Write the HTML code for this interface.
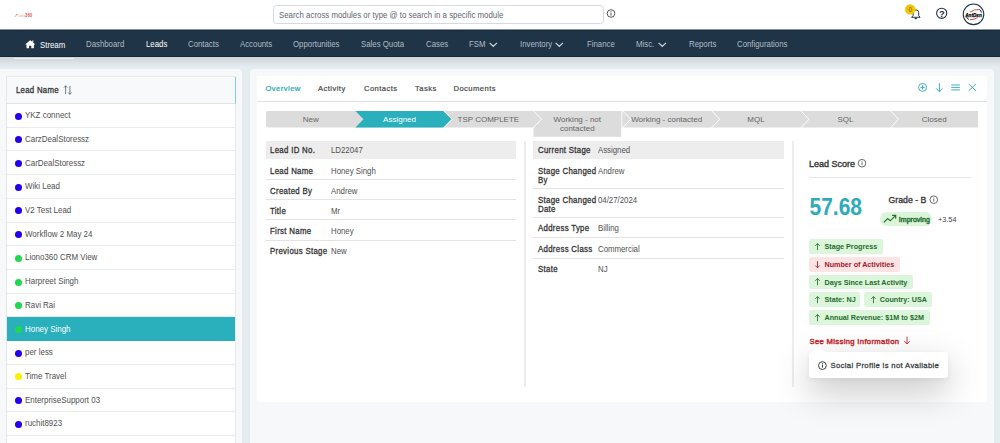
<!DOCTYPE html>
<html><head><meta charset="utf-8">
<style>
*{box-sizing:border-box;margin:0;padding:0}
html,body{width:1000px;height:443px;overflow:hidden;background:#e5ecef;font-family:"Liberation Sans",sans-serif;color:#333}
.a{position:absolute;white-space:nowrap}
svg{position:absolute;overflow:visible}
#top{position:absolute;left:0;top:0;width:1000px;height:29px;background:#fff}
#nav{position:absolute;left:0;top:29px;width:1000px;height:28px;background:#1f3446;border-top:1px solid #8a959f;box-shadow:inset 0 1px 0 #17283a,inset 0 -1px 0 #16273a}
#nav .n{position:absolute;top:9px;font-size:8.7px;line-height:10px;color:#b0bcc7;white-space:nowrap;transform:scaleX(0.9);transform-origin:0 0}
#nav .w{color:#fff}
#shade{position:absolute;left:0;top:57px;width:1000px;height:10px;background:linear-gradient(#cdd3d7,#e5ecef)}
#left{position:absolute;left:0;top:69px;width:242px;height:380px;background:#f6f8fa;border-radius:0 4px 0 0}
#tbl{position:absolute;left:6px;top:76px;width:230px;height:380px;background:#fff;border-left:1px solid #e3e7ea;border-right:1px solid #e8ebee;border-top:1px solid #e9ecef}
.hdr{position:absolute;left:0;top:0;width:229px;height:27px;background:#f7f9fa;border-bottom:1px solid #e1e5e8;border-right:1px solid #7ccdd4}
.row{position:absolute;left:0;width:228px;height:23.72px;border-bottom:1px solid #e8ebee;font-size:8px;color:#505050}
.row .d{position:absolute;left:7.5px;top:8.5px;width:7px;height:7px;border-radius:50%}
.row .t{position:absolute;left:18px;top:6.1px;line-height:10px;white-space:nowrap;font-size:8.7px;transform:scaleX(0.915);transform-origin:0 0}
.row.sel{background:#2aafbc;color:#fff;border-bottom-color:#2aafbc}
#right{position:absolute;left:250px;top:69px;width:744px;height:380px;background:#f6f8fa;border-radius:4px}
#card{position:absolute;left:257px;top:76px;width:730px;height:325.5px;background:#fff;border-radius:2px}
.tab{position:absolute;top:83.9px;font-size:7.6px;line-height:10px;color:#4d4d4d;-webkit-text-stroke:0.22px currentColor;letter-spacing:0.45px;white-space:nowrap}
.lbl{position:absolute;font-size:8.7px;line-height:8.5px;color:#333;-webkit-text-stroke:0.3px currentColor;letter-spacing:0.35px;transform:scaleX(0.9);transform-origin:0 0}
.val{position:absolute;font-size:8.7px;line-height:10px;color:#505050;white-space:nowrap;transform:scaleX(0.9);transform-origin:0 0}
.st{position:absolute;font-size:8px;line-height:9px;color:#666;text-align:center;white-space:nowrap}
.chip{position:absolute;height:14.6px;border-radius:2.5px;background:#dcf6dc;color:#246b2b;font-size:7.2px;font-weight:bold;line-height:15px;padding-left:15.5px;white-space:nowrap}
.chip.r{background:#fde4e4;color:#a3182a}
.chip svg{left:5.3px;top:3.5px}
</style></head><body>
<div id="top">
 <svg style="left:13px;top:11px" width="22" height="8" viewBox="0 0 22 8"><path d="M1.6 6.2 L3.6 3.6" stroke="#ee8a86" stroke-width="0.7"/><circle cx="3.8" cy="3.6" r="0.7" fill="#e46a64"/><text x="5" y="5.9" font-size="4" fill="#ee9d99" font-family="Liberation Sans" textLength="7" lengthAdjust="spacingAndGlyphs">Liono</text><text x="12" y="6" font-size="4.6" font-weight="bold" fill="#e25a54" font-family="Liberation Sans" textLength="7.2" lengthAdjust="spacingAndGlyphs">360</text></svg>
 <div class="a" style="left:273px;top:5px;width:331px;height:19px;border:1px solid #d5dadf;border-radius:3.5px"></div>
 <div class="a" style="left:278.6px;top:9.9px;font-size:8.6px;line-height:10px;color:#5d6670;transform:scaleX(0.915);transform-origin:0 0">Search across modules or type @ to search in a specific module</div>
 <svg style="left:606px;top:9px" width="10" height="10" viewBox="0 0 10 10"><circle cx="5" cy="4.5" r="3.8" fill="none" stroke="#444" stroke-width="0.9"/><rect x="4.55" y="3.6" width="0.9" height="3" fill="#444"/><rect x="4.55" y="2.2" width="0.9" height="0.9" fill="#444"/></svg>
 <svg style="left:905px;top:3px" width="20" height="20" viewBox="0 0 20 20">
  <path d="M6.6 14.3 H15.1 L13.7 12.6 V9.6 A2.75 2.75 0 0 0 8.1 9.6 V12.6 Z" fill="none" stroke="#1d2b3a" stroke-width="0.95" stroke-linejoin="round"/>
  <path d="M9.6 15 a1.2 1.2 0 0 0 2.4 0 z" fill="#1d2b3a"/>
  <circle cx="5.2" cy="6.4" r="5.2" fill="#f3c400"/>
  <text x="5.2" y="9.3" font-size="7.6" text-anchor="middle" fill="#6e5d10" font-family="Liberation Sans" transform="translate(5.2 0) scale(0.8 1) translate(-5.2 0)">0</text>
 </svg>
 <svg style="left:935px;top:7px" width="14" height="14" viewBox="0 0 14 14"><circle cx="6.7" cy="6.25" r="5.1" fill="none" stroke="#1d2b3a" stroke-width="1.05"/><text x="6.75" y="9.55" font-size="9.4" font-weight="bold" text-anchor="middle" fill="#1d2b3a" font-family="Liberation Sans">?</text></svg>
 <svg style="left:962px;top:3px" width="24" height="24" viewBox="0 0 24 24"><circle cx="11.5" cy="11.35" r="10.3" fill="#fff" stroke="#203449" stroke-width="1.1"/><path d="M7.8 9.2 Q12.5 6 17.4 6.6" fill="none" stroke="#d83a3a" stroke-width="0.9"/><path d="M17.4 6.6 Q19.4 7.4 19.4 9.6" fill="none" stroke="#111" stroke-width="0.9"/><path d="M8 16.8 Q12.5 16.6 15.6 14.6" fill="none" stroke="#d83a3a" stroke-width="0.9"/><path d="M4.4 12.6 Q4.6 15.8 6.8 16.4" fill="none" stroke="#111" stroke-width="0.9"/><text x="3.2" y="14" font-size="6" font-weight="bold" font-style="italic" fill="#000" stroke="#000" stroke-width="0.25" font-family="Liberation Sans" textLength="16.6" lengthAdjust="spacingAndGlyphs">AntDsn</text></svg>
</div>
<div id="nav">
 <svg style="left:25px;top:9.8px" width="11" height="9" viewBox="0 0 11 9"><path d="M5.2 0.2 L0.1 4.6 L1.5 4.6 L1.5 8.3 L4.1 8.3 L4.1 5.8 L6.3 5.8 L6.3 8.3 L8.9 8.3 L8.9 4.6 L10.3 4.6 L8.3 2.8 L8.3 0.4 L7.2 0.4 L7.2 1.8 Z" fill="#fff"/></svg>
 <span class="n w" style="left:39.5px;top:10px">Stream</span>
 <span class="n" style="left:86px">Dashboard</span>
 <span class="n w" style="left:145.5px">Leads</span>
 <span class="n" style="left:187.5px">Contacts</span>
 <span class="n" style="left:240px">Accounts</span>
 <span class="n" style="left:293px">Opportunities</span>
 <span class="n" style="left:361px">Sales Quota</span>
 <span class="n" style="left:425.5px">Cases</span>
 <span class="n" style="left:469px">FSM</span>
 <svg style="left:488.5px;top:11.6px" width="9" height="6" viewBox="0 0 9 6"><path d="M0.6 0.9 L4.3 4.3 L8 0.9" fill="none" stroke="#c8d1da" stroke-width="1.25"/></svg>
 <span class="n" style="left:520px">Inventory</span>
 <svg style="left:555.3px;top:11.6px" width="9" height="6" viewBox="0 0 9 6"><path d="M0.6 0.9 L4.3 4.3 L8 0.9" fill="none" stroke="#c8d1da" stroke-width="1.25"/></svg>
 <span class="n" style="left:587px">Finance</span>
 <span class="n" style="left:636px">Misc.</span>
 <svg style="left:657.6px;top:11.6px" width="9" height="6" viewBox="0 0 9 6"><path d="M0.6 0.9 L4.3 4.3 L8 0.9" fill="none" stroke="#c8d1da" stroke-width="1.25"/></svg>
 <span class="n" style="left:689px">Reports</span>
 <span class="n" style="left:737px">Configurations</span>
</div>
<div id="shade"></div>
<div class="a" style="left:14px;top:57.5px;width:60px;height:1.6px;background:#eef0f2"></div>
<div id="left"></div>
<div id="tbl">
 <div class="hdr">
  <span class="a" style="left:9px;top:8.3px;font-size:8.7px;line-height:10px;color:#333;-webkit-text-stroke:0.3px currentColor;letter-spacing:0.3px;transform:scaleX(0.9);transform-origin:0 0">Lead Name</span>
  <svg style="left:56px;top:8px" width="11" height="11" viewBox="0 0 11 11"><path d="M2.6 9.2 V0.8 M0.9 2.6 L2.6 0.8 L4.3 2.6" fill="none" stroke="#4a5360" stroke-width="0.75"/><path d="M6.9 0.9 V9.3 M5.2 7.5 L6.9 9.3 L8.6 7.5" fill="none" stroke="#4a5360" stroke-width="0.75"/></svg>
 </div>
 <div class="row" style="top:27.00px"><i class="d" style="background:#2200ee"></i><span class="t">YKZ connect</span></div>
 <div class="row" style="top:50.72px"><i class="d" style="background:#2200ee"></i><span class="t">CarzDealStoressz</span></div>
 <div class="row" style="top:74.44px"><i class="d" style="background:#2200ee"></i><span class="t">CarDealStoressz</span></div>
 <div class="row" style="top:98.16px"><i class="d" style="background:#2200ee"></i><span class="t">Wiki Lead</span></div>
 <div class="row" style="top:121.88px"><i class="d" style="background:#2200ee"></i><span class="t">V2 Test Lead</span></div>
 <div class="row" style="top:145.60px"><i class="d" style="background:#2200ee"></i><span class="t">Workflow 2 May 24</span></div>
 <div class="row" style="top:169.32px"><i class="d" style="background:#1ed84e"></i><span class="t">Liono360 CRM View</span></div>
 <div class="row" style="top:193.04px"><i class="d" style="background:#1ed84e"></i><span class="t">Harpreet Singh</span></div>
 <div class="row" style="top:216.76px"><i class="d" style="background:#1ed84e"></i><span class="t">Ravi Rai</span></div>
 <div class="row sel" style="top:240.48px"><i class="d" style="background:#1ed84e"></i><span class="t">Honey Singh</span></div>
 <div class="row" style="top:264.20px"><i class="d" style="background:#2200ee"></i><span class="t">per less</span></div>
 <div class="row" style="top:287.92px"><i class="d" style="background:#fcef00"></i><span class="t">Time Travel</span></div>
 <div class="row" style="top:311.64px"><i class="d" style="background:#2200ee"></i><span class="t">EnterpriseSupport 03</span></div>
 <div class="row" style="top:335.36px"><i class="d" style="background:#2200ee"></i><span class="t">ruchit8923</span></div>
 <div class="row" style="top:359.08px"></div>
</div>
<div id="right"></div>
<div id="card"></div>
<!-- tabs -->
<span class="tab" style="left:265.5px;color:#2aa8b8">Overview</span>
<span class="tab" style="left:318px">Activity</span>
<span class="tab" style="left:364px">Contacts</span>
<span class="tab" style="left:415px">Tasks</span>
<span class="tab" style="left:453.5px">Documents</span>
<div class="a" style="left:257px;top:100.5px;width:730px;height:1px;background:#dfe3e7"></div>
<svg style="left:917px;top:82px" width="64" height="12" viewBox="0 0 64 12">
 <circle cx="5.6" cy="5.4" r="4" fill="none" stroke="#2aa8b8" stroke-width="0.9"/><path d="M5.6 3.2 V7.6 M3.4 5.4 H7.8" stroke="#2aa8b8" stroke-width="0.9"/>
 <path d="M22.4 1.2 V9.6 M19.2 6.4 L22.4 9.6 L25.6 6.4" fill="none" stroke="#2aa8b8" stroke-width="0.9"/>
 <path d="M34.3 3 H42.9 M34.3 5.4 H42.9 M34.3 7.9 H42.9" stroke="#2aa8b8" stroke-width="0.9"/>
 <path d="M51.7 1.9 L59 8.9 M59 1.9 L51.7 8.9" stroke="#2aa8b8" stroke-width="0.9"/>
</svg>
<!-- stage bar -->
<svg style="left:0;top:0" width="1000" height="443" viewBox="0 0 1000 443">
 <path d="M268 111 H978 V127.5 H268 Q266 127.5 266 125.5 V113 Q266 111 268 111 Z" fill="#dcdcdc"/>
 <rect x="533.5" y="111" width="88" height="25.8" fill="#dcdcdc"/>
 <rect x="621.4" y="110.5" width="0.9" height="26.5" fill="#fff"/>
 <g fill="none" stroke="#fff" stroke-width="1">
  <path d="M533 110.5 L541.5 119.25 L533 128"/>
  <path d="M622.3 110.5 L630.7 119.25 L622.3 128"/>
  <path d="M711.3 110.5 L719.8 119.25 L711.3 128"/>
  <path d="M800.6 110.5 L809 119.25 L800.6 128"/>
  <path d="M890.4 110.5 L898.5 119.25 L890.4 128"/>
  <path d="M443.7 110.5 L452.2 119.25 L443.7 128"/>
 </g>
 <path d="M355.4 111 H443.2 L451.3 119.25 L443.2 127.5 H355.4 L363.5 119.25 Z" fill="#2aafbc"/>
 <path d="M1 1" />
</svg>
<span class="st" style="left:266px;width:89.4px;top:115px">New</span>
<span class="st" style="left:355.4px;width:88.3px;top:115px;color:#fff">Assigned</span>
<span class="st" style="left:443.7px;width:89.3px;top:115px">TSP COMPLETE</span>
<span class="st" style="left:533px;width:88.6px;top:115px;white-space:normal">Working - not<br>contacted</span>
<span class="st" style="left:622px;width:89.3px;top:115px">Working - contacted</span>
<span class="st" style="left:711.3px;width:89.3px;top:115px">MQL</span>
<span class="st" style="left:800.6px;width:89.8px;top:115px">SQL</span>
<span class="st" style="left:890.4px;width:87.6px;top:115px">Closed</span>
<!-- col1 -->
<div class="a" style="left:265.7px;top:141px;width:250.2px;height:18px;background:#ededed"></div>
<div class="a" style="left:265.7px;top:179.2px;width:250.2px;height:1px;background:#e3e3e3"></div>
<div class="a" style="left:265.7px;top:199.2px;width:250.2px;height:1px;background:#e3e3e3"></div>
<div class="a" style="left:265.7px;top:219.3px;width:250.2px;height:1px;background:#e3e3e3"></div>
<div class="a" style="left:265.7px;top:239.5px;width:250.2px;height:1px;background:#e3e3e3"></div>
<span class="lbl" style="left:270.2px;top:146.4px">Lead ID No.</span><span class="val" style="left:330.7px;top:144.8px">LD22047</span>
<span class="lbl" style="left:270.2px;top:167.4px">Lead Name</span><span class="val" style="left:330.7px;top:165.8px">Honey Singh</span>
<span class="lbl" style="left:270.2px;top:187.4px">Created By</span><span class="val" style="left:330.7px;top:185.8px">Andrew</span>
<span class="lbl" style="left:270.2px;top:207.4px">Title</span><span class="val" style="left:330.7px;top:205.8px">Mr</span>
<span class="lbl" style="left:270.2px;top:227.4px">First Name</span><span class="val" style="left:330.7px;top:225.8px">Honey</span>
<span class="lbl" style="left:270.2px;top:247.4px">Previous Stage</span><span class="val" style="left:330.7px;top:245.8px">New</span>
<div class="a" style="left:524px;top:141px;width:2px;height:245.6px;background:#ececec"></div>
<!-- col2 -->
<div class="a" style="left:533px;top:141px;width:250.7px;height:18px;background:#ededed"></div>
<div class="a" style="left:533px;top:187.7px;width:250.7px;height:1px;background:#e3e3e3"></div>
<div class="a" style="left:533px;top:216.8px;width:250.7px;height:1px;background:#e3e3e3"></div>
<div class="a" style="left:533px;top:237.1px;width:250.7px;height:1px;background:#e3e3e3"></div>
<div class="a" style="left:533px;top:258.1px;width:250.7px;height:1px;background:#e3e3e3"></div>
<span class="lbl" style="left:537.6px;top:146.4px">Current Stage</span><span class="val" style="left:597.9px;top:144.8px">Assigned</span>
<span class="lbl" style="left:537.6px;top:167.4px;width:68px;white-space:normal">Stage Changed By</span><span class="val" style="left:597.9px;top:165.8px">Andrew</span>
<span class="lbl" style="left:537.6px;top:196.4px;width:68px;white-space:normal">Stage Changed Date</span><span class="val" style="left:597.9px;top:194.8px">04/27/2024</span>
<span class="lbl" style="left:537.6px;top:224.4px">Address Type</span><span class="val" style="left:597.9px;top:222.8px">Billing</span>
<span class="lbl" style="left:537.6px;top:245.4px">Address Class</span><span class="val" style="left:597.9px;top:243.8px">Commercial</span>
<span class="lbl" style="left:537.6px;top:265.4px">State</span><span class="val" style="left:597.9px;top:263.8px">NJ</span>
<div class="a" style="left:792px;top:141px;width:1.5px;height:245.6px;background:#eeeeee"></div>
<!-- col3 -->
<span class="a" style="left:809px;top:159px;font-size:9px;line-height:10px;color:#333;-webkit-text-stroke:0.35px currentColor">Lead Score</span>
<svg style="left:857px;top:158px" width="10" height="10" viewBox="0 0 10 10"><circle cx="5" cy="5.2" r="3.8" fill="none" stroke="#444" stroke-width="0.8"/><rect x="4.6" y="4.3" width="0.8" height="2.8" fill="#444"/><rect x="4.6" y="3" width="0.8" height="0.8" fill="#444"/></svg>
<div class="a" style="left:809px;top:177px;width:162px;height:1px;background:#e6e6e6"></div>
<span class="a" style="left:809.5px;top:195px;font-size:21px;line-height:22px;font-weight:bold;color:#2eabbb;transform:scaleY(1.12);transform-origin:0 3.8px">57.68</span>
<span class="a" style="left:888.6px;top:194.6px;font-size:8.7px;line-height:10px;color:#3a3a3a;-webkit-text-stroke:0.35px currentColor">Grade - B</span>
<svg style="left:929px;top:195px" width="10" height="10" viewBox="0 0 10 10"><circle cx="4.8" cy="4.7" r="3.8" fill="none" stroke="#444" stroke-width="0.8"/><rect x="4.4" y="3.8" width="0.8" height="2.8" fill="#444"/><rect x="4.4" y="2.5" width="0.8" height="0.8" fill="#444"/></svg>
<div class="a" style="left:880.4px;top:212.4px;width:51.5px;height:14px;border-radius:7px;background:#daf5da"></div>
<svg style="left:883px;top:214px" width="14" height="10" viewBox="0 0 14 10"><path d="M0.8 8.4 L4.8 4.6 L7.2 6.8 L12.2 1.8" fill="none" stroke="#246b2b" stroke-width="1.15"/><path d="M9.2 1.3 H12.7 V4.8" fill="none" stroke="#246b2b" stroke-width="1.15"/></svg>
<span class="a" style="left:898.8px;top:215.2px;font-size:7px;line-height:10px;color:#246b2b;-webkit-text-stroke:0.4px currentColor;letter-spacing:0.03px">Improving</span>
<span class="a" style="left:937.5px;top:214.8px;font-size:8.1px;line-height:10px;color:#444;transform:scaleX(0.9);transform-origin:0 0">+3.54</span>
<!-- chips -->
<div class="chip" style="left:809px;top:239px;width:73.5px"><svg width="8" height="8" viewBox="0 0 8 8"><path d="M3.5 7.2 V0.6 M1.3 2.8 L3.5 0.6 L5.7 2.8" fill="none" stroke="#246b2b" stroke-width="0.85"/></svg>Stage Progress</div>
<div class="chip r" style="left:809px;top:257px;width:90.7px"><svg width="8" height="8" viewBox="0 0 8 8"><path d="M3.5 0.2 V6.8 M1.3 4.6 L3.5 6.8 L5.7 4.6" fill="none" stroke="#a3182a" stroke-width="0.85"/></svg>Number of Activities</div>
<div class="chip" style="left:809px;top:274.5px;width:103.8px"><svg width="8" height="8" viewBox="0 0 8 8"><path d="M3.5 7.2 V0.6 M1.3 2.8 L3.5 0.6 L5.7 2.8" fill="none" stroke="#246b2b" stroke-width="0.85"/></svg>Days Since Last Activity</div>
<div class="chip" style="left:809px;top:292.3px;width:51.3px"><svg width="8" height="8" viewBox="0 0 8 8"><path d="M3.5 7.2 V0.6 M1.3 2.8 L3.5 0.6 L5.7 2.8" fill="none" stroke="#246b2b" stroke-width="0.85"/></svg>State: NJ</div>
<div class="chip" style="left:864.3px;top:292.3px;width:67.7px"><svg width="8" height="8" viewBox="0 0 8 8"><path d="M3.5 7.2 V0.6 M1.3 2.8 L3.5 0.6 L5.7 2.8" fill="none" stroke="#246b2b" stroke-width="0.85"/></svg>Country: USA</div>
<div class="chip" style="left:809px;top:310.2px;width:120.6px"><svg width="8" height="8" viewBox="0 0 8 8"><path d="M3.5 7.2 V0.6 M1.3 2.8 L3.5 0.6 L5.7 2.8" fill="none" stroke="#246b2b" stroke-width="0.85"/></svg>Annual Revenue: $1M to $2M</div>
<span class="a" style="left:809.5px;top:337px;font-size:7.7px;line-height:10px;color:#c42a30;-webkit-text-stroke:0.42px currentColor;letter-spacing:0.32px">See Missing Information</span>
<svg style="left:903px;top:335.5px" width="8" height="9" viewBox="0 0 8 9"><path d="M4 0.6 V8 M1.3 5.2 L4 8 L6.7 5.2" fill="none" stroke="#c0282f" stroke-width="0.9"/></svg>
<!-- popover -->
<div class="a" style="left:809px;top:351.6px;width:139px;height:26px;background:#fff;border-radius:3px;box-shadow:0 13px 34px rgba(0,0,0,0.25),0 2px 5px rgba(0,0,0,0.06)"></div>
<svg style="left:810px;top:344px" width="20" height="9" viewBox="0 0 20 9"><path d="M1.5 8.5 L9.3 2.3 L16.5 8.5 Z" fill="#fff"/></svg>
<svg style="left:816.5px;top:359.5px" width="11" height="11" viewBox="0 0 11 11"><circle cx="5.4" cy="5.6" r="3.9" fill="none" stroke="#3a3f44" stroke-width="1"/><rect x="4.95" y="4.6" width="1" height="3" fill="#3a3f44"/><rect x="4.95" y="3.2" width="1" height="0.95" fill="#3a3f44"/></svg>
<span class="a" style="left:830.5px;top:361px;font-size:7.7px;line-height:10px;color:#3a3f44;-webkit-text-stroke:0.28px currentColor;letter-spacing:0.34px">Social Profile is not Available</span>
</body></html>
